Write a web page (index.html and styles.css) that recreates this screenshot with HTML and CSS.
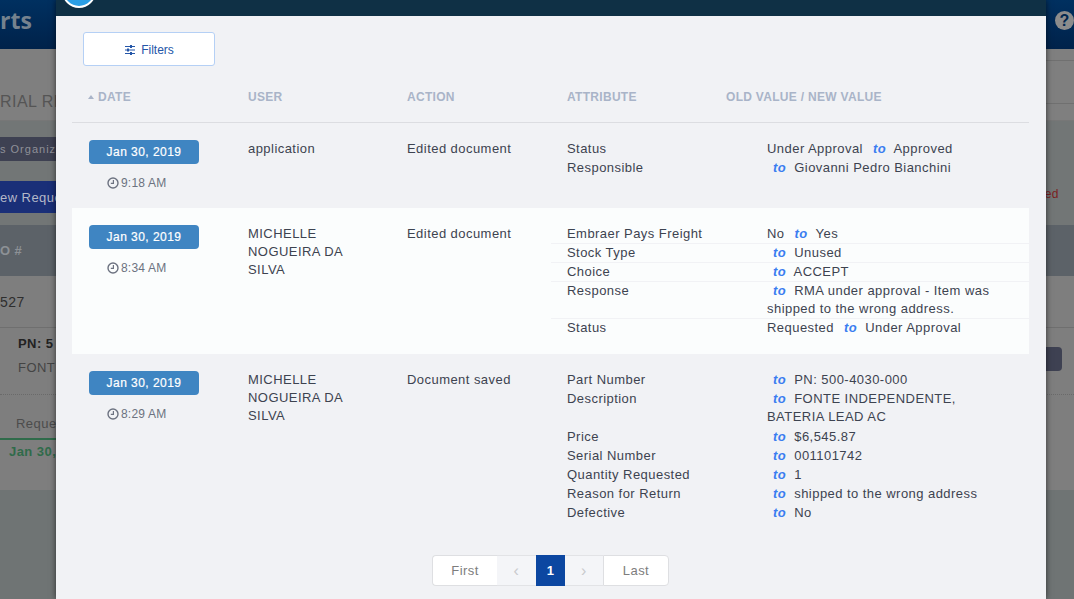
FILE: index.html
```html
<!DOCTYPE html>
<html lang="en">
<head>
    <meta charset="UTF-8">
    <meta name="viewport" content="width=device-width, initial-scale=1.0">
    <title>Material Return History</title>
    <link rel="stylesheet" href="styles.css">
</head>
<body>
    <!-- dimmed page behind the modal -->
    <div class="page">
        <div class="topbar">
            <span class="brand">rts</span>
            <span class="help">?</span>
        </div>
        <div class="titlebar">
            <span class="title-text">RIAL RE</span>
            <span class="title-lines"></span>
        </div>
        <div class="toolbar">
            <div class="org">s Organiza</div>
            <div class="toolbar-row">
                <div class="new-request">ew Reque</div>
                <div class="status-red">ed</div>
            </div>
        </div>
        <div class="bg-head"><span>O #</span></div>
        <div class="bg-row"><span>527</span></div>
        <div class="bg-part">
            <div>
                <div class="bg-pn">PN: 5</div>
                <div class="bg-desc">FONT</div>
            </div>
            <div class="bg-action"></div>
        </div>
        <div class="bg-tabs"><span class="bg-tab">Reques</span></div>
        <div class="bg-date">Jan 30,</div>
    </div>

    <div class="modal">
        <div class="modal-head"><span class="modal-badge"></span></div>
        <div class="modal-body">
            <button class="filter-btn">
                <svg class="filter-icon" viewBox="0 0 12 12" width="12" height="12">
                    <path d="M1 2.5h10M1 6h10M1 9.5h10" stroke="#2456a8" stroke-width="1" fill="none"/>
                    <path d="M7 1v3M4 4.5v3M7 8v3" stroke="#2456a8" stroke-width="2" fill="none"/>
                </svg>
                Filters
            </button>

            <div class="log-head">
                <div class="col-date"><span class="sort-caret"></span>DATE</div>
                <div>USER</div>
                <div>ACTION</div>
                <div>ATTRIBUTE</div>
                <div>OLD VALUE / NEW VALUE</div>
            </div>

            <div class="log-row">
                <div class="when">
                    <div class="pill">Jan 30, 2019</div>
                    <div class="time">
                        <svg class="clock" viewBox="0 0 12 12" width="12" height="12"><circle cx="6" cy="6" r="5" fill="none" stroke="#6c7280" stroke-width="1.4"/><path d="M6.4 3v3.4H3.8" fill="none" stroke="#6c7280" stroke-width="1.2"/></svg>9:18 AM
                    </div>
                </div>
                <div class="who">application</div>
                <div class="what">Edited document</div>
                <div class="changes">
                    <div class="change"><div>Status</div><div>Under Approval <i>to</i> Approved</div></div>
                    <div class="change"><div>Responsible</div><div class="val-new"><i>to</i> Giovanni Pedro Bianchini</div></div>
                </div>
            </div>

            <div class="log-row log-row-light">
                <div class="when">
                    <div class="pill">Jan 30, 2019</div>
                    <div class="time">
                        <svg class="clock" viewBox="0 0 12 12" width="12" height="12"><circle cx="6" cy="6" r="5" fill="none" stroke="#6c7280" stroke-width="1.4"/><path d="M6.4 3v3.4H3.8" fill="none" stroke="#6c7280" stroke-width="1.2"/></svg>8:34 AM
                    </div>
                </div>
                <div class="who">MICHELLE NOGUEIRA DA SILVA</div>
                <div class="what">Edited document</div>
                <div class="changes">
                    <div class="change"><div>Embraer Pays Freight</div><div>No <i>to</i> Yes</div></div>
                    <div class="change"><div>Stock Type</div><div class="val-new"><i>to</i> Unused</div></div>
                    <div class="change"><div>Choice</div><div class="val-new"><i>to</i> ACCEPT</div></div>
                    <div class="change"><div>Response</div><div class="val-new"><i>to</i> RMA under approval - Item was shipped to the wrong address.</div></div>
                    <div class="change"><div>Status</div><div>Requested <i>to</i> Under Approval</div></div>
                </div>
            </div>

            <div class="log-row">
                <div class="when">
                    <div class="pill">Jan 30, 2019</div>
                    <div class="time">
                        <svg class="clock" viewBox="0 0 12 12" width="12" height="12"><circle cx="6" cy="6" r="5" fill="none" stroke="#6c7280" stroke-width="1.4"/><path d="M6.4 3v3.4H3.8" fill="none" stroke="#6c7280" stroke-width="1.2"/></svg>8:29 AM
                    </div>
                </div>
                <div class="who">MICHELLE NOGUEIRA DA SILVA</div>
                <div class="what">Document saved</div>
                <div class="changes">
                    <div class="change"><div>Part Number</div><div class="val-new"><i>to</i> PN: 500-4030-000</div></div>
                    <div class="change change-tall"><div>Description</div><div class="val-new"><i>to</i> FONTE INDEPENDENTE, BATERIA LEAD AC</div></div>
                    <div class="change"><div>Price</div><div class="val-new"><i>to</i> $6,545.87</div></div>
                    <div class="change"><div>Serial Number</div><div class="val-new"><i>to</i> 001101742</div></div>
                    <div class="change"><div>Quantity Requested</div><div class="val-new"><i>to</i> 1</div></div>
                    <div class="change"><div>Reason for Return</div><div class="val-new"><i>to</i> shipped to the wrong address</div></div>
                    <div class="change"><div>Defective</div><div class="val-new"><i>to</i> No</div></div>
                </div>
            </div>

            <div class="pager">
                <span class="page-link page-first">First</span>
                <span class="page-link page-arrow">&#8249;</span>
                <span class="page-link page-current">1</span>
                <span class="page-link page-arrow page-next">&#8250;</span>
                <span class="page-link page-last">Last</span>
            </div>
        </div>
    </div>
</body>
</html>
```

FILE: styles.css
```css
* {
    box-sizing: border-box;
}

html, body {
    height: 100%;
}

body {
    margin: 0;
    overflow: hidden;
    font-family: "Liberation Sans", Arial, sans-serif;
    font-size: 13px;
    letter-spacing: 0.45px;
    color: #3d4350;
    background-color: #6f7474;
}

/* page behind the modal */
.page {
    height: 490px;
    background-color: #7e7e7e;
    color: #333;
}

.topbar {
    height: 49px;
    background: linear-gradient(180deg, #003060 0%, #00224a 100%);
    display: flex;
    justify-content: space-between;
    align-items: center;
}

.brand {
    width: 56px;
    overflow: hidden;
    margin-top: -9px;
    font-family: "Open Sans", sans-serif;
    font-size: 23px;
    font-weight: 700;
    letter-spacing: 0;
    color: #75828e;
}

.help {
    width: 19px;
    height: 19px;
    margin-top: -8px;
    border-radius: 50%;
    background-color: #8c8c8c;
    color: #00264f;
    font-size: 16px;
    font-weight: 700;
    line-height: 19px;
    text-align: center;
    letter-spacing: 0;
}

.titlebar {
    display: flex;
    justify-content: space-between;
    height: 72px;
    padding-top: 11px;
    border-bottom: 1px solid #777;
    background-color: #7f7f7f;
}

.title-text {
    width: 56px;
    margin-top: 32px;
    overflow: hidden;
    white-space: nowrap;
    font-size: 16px;
    line-height: 20px;
    color: #555;
}

.title-lines {
    width: 28px;
    height: 44px;
    border-top: 1px solid #707070;
    border-bottom: 1px solid #707070;
}

.toolbar {
    height: 104px;
    padding-top: 16px;
    background-color: #727676;
}

.org {
    width: 56px;
    height: 24px;
    background-color: #3e4152;
    color: #8f9098;
    font-size: 11px;
    line-height: 24px;
    white-space: nowrap;
    overflow: hidden;
    letter-spacing: 1px;
}

.toolbar-row {
    display: flex;
    justify-content: space-between;
    margin-top: 20px;
}

.new-request {
    width: 56px;
    height: 32px;
    background-color: #1a2f78;
    color: #b4b8c8;
    line-height: 34px;
    white-space: nowrap;
    overflow: hidden;
}

.status-red {
    margin: 6px 15px 0 0;
    font-size: 12px;
    color: #7c1f1f;
}

.bg-head {
    height: 51px;
    background-color: #5c6268;
    color: #8d9196;
    font-weight: 700;
    line-height: 51px;
}

.bg-row {
    height: 52px;
    line-height: 52px;
    font-size: 14px;
    color: #2e2e2e;
    border-bottom: 1px solid #6f6f6f;
}

.bg-part {
    height: 67px;
    padding: 7px 12px 0 18px;
    display: flex;
    justify-content: space-between;
    border-bottom: 1px dotted #6a6a6a;
}

.bg-pn {
    font-weight: 700;
    line-height: 18px;
    color: #222;
}

.bg-desc {
    margin-top: 7px;
    color: #444;
    white-space: nowrap;
}

.bg-action {
    width: 20px;
    height: 24px;
    margin-top: 12px;
    border-radius: 4px;
    background-color: #3e4152;
}

.bg-tabs {
    height: 44px;
    padding-top: 21px;
}

.bg-tab {
    display: block;
    width: 200px;
    height: 24px;
    padding-left: 16px;
    border-bottom: 2px solid #2f6b4a;
    color: #4c4c4c;
    font-size: 13px;
}

.bg-date {
    padding: 5px 0 0 9px;
    font-size: 13px;
    font-weight: 700;
    color: #2f6b4a;
}

/* modal */
.modal {
    position: absolute;
    top: 0;
    left: 56px;
    width: 990px;
    height: 599px;
    background-color: #f1f2f5;
    box-shadow: 0 0 6px rgba(0, 0, 0, 0.6);
    overflow: hidden;
}

.modal-head {
    position: relative;
    height: 16px;
    background-color: #0f3045;
    overflow: hidden;
}

.modal-badge {
    position: absolute;
    left: 6px;
    top: -26px;
    width: 34px;
    height: 34px;
    border: 2px solid #fff;
    border-radius: 50%;
    background-color: #2a9fe6;
}

.modal-body {
    padding: 16px 17px 0 16px;
}

.filter-btn {
    display: flex;
    align-items: center;
    justify-content: center;
    width: 132px;
    height: 34px;
    margin-left: 11px;
    padding: 1px 0 0;
    background-color: #fff;
    border: 1px solid #b5d0f5;
    border-radius: 3px;
    color: #2456a8;
    font-family: inherit;
    font-size: 12px;
}

.filter-icon {
    margin-right: 5px;
}

.log-head {
    display: grid;
    grid-template-columns: 176px 159px 160px 159px 1fr;
    height: 57px;
    padding-top: 24px;
    border-bottom: 1px solid #dcdde1;
    font-size: 12px;
    font-weight: 700;
    line-height: 14px;
    letter-spacing: 0.3px;
    color: #a9b4c8;
}

.col-date {
    align-self: start;
    padding-left: 16px;
    display: flex;
    align-items: center;
}

.sort-caret {
    width: 0;
    height: 0;
    margin-right: 4px;
    border-left: 3.5px solid transparent;
    border-right: 3.5px solid transparent;
    border-bottom: 4px solid #a9b4c8;
}

.log-row {
    display: grid;
    grid-template-columns: 176px 159px 144px 1fr;
    padding: 17px 0;
    line-height: 18px;
}

.log-row-light {
    padding-bottom: 16px;
    background-color: #fbfdfd;
}

.pill {
    width: 110px;
    height: 24px;
    margin-left: 17px;
    background-color: #3f85c2;
    border-radius: 4px;
    color: #fff;
    font-size: 12px;
    line-height: 24px;
    text-align: center;
    -webkit-text-stroke: 0.2px #fff;
}

.time {
    display: flex;
    align-items: center;
    height: 17px;
    margin: 10px 0 0 35px;
    font-size: 12px;
    color: #6c7280;
    letter-spacing: 0.2px;
}

.clock {
    margin-right: 2px;
}

.who {
    padding-right: 40px;
}

.change {
    display: grid;
    grid-template-columns: 200px 1fr;
    padding: 0 30px 0 16px;
    min-height: 19px;
    border-bottom: 1px solid #f1f2f5;
}

.change:last-child {
    border-bottom: none;
}

.change-tall {
    min-height: 38px;
}

.log-row:not(.log-row-light) .change {
    border-bottom: 1px solid transparent;
}

.change i {
    margin: 0 4px 0 6px;
    font-weight: 700;
    color: #3a7df0;
}

.pager {
    display: flex;
    justify-content: center;
    margin-top: 15px;
    height: 31px;
    line-height: 29px;
    font-size: 13px;
    color: #7d7d7d;
}

.page-link {
    text-align: center;
    border-top: 1px solid #e2e3e6;
    border-bottom: 1px solid #e2e3e6;
}

.page-first, .page-last {
    background-color: #fff;
    border: 1px solid #dedfe2;
}

.page-first {
    width: 65px;
    border-right: none;
    border-radius: 4px 0 0 4px;
}

.page-last {
    width: 66px;
    border-radius: 0 4px 4px 0;
}

.page-arrow {
    width: 39px;
    background-color: #f4f5f8;
    color: #c9cacd;
    font-size: 16px;
}

.page-next {
    width: 38px;
}

.page-current {
    width: 29px;
    background-color: #0c47a1;
    border-color: #0c47a1;
    color: #fff;
    font-weight: 700;
}
```
